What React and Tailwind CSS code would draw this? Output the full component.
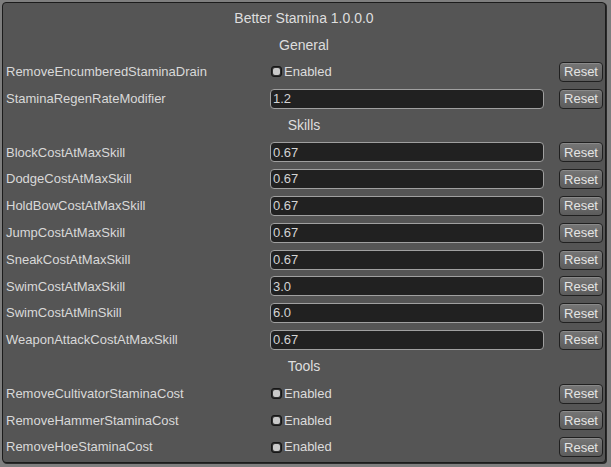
import React from 'react';

const sections = [
  {
    title: 'General',
    rows: [
      { name: 'RemoveEncumberedStaminaDrain', toggle: true },
      { name: 'StaminaRegenRateModifier', value: '1.2' },
    ],
  },
  {
    title: 'Skills',
    rows: [
      { name: 'BlockCostAtMaxSkill', value: '0.67' },
      { name: 'DodgeCostAtMaxSkill', value: '0.67' },
      { name: 'HoldBowCostAtMaxSkill', value: '0.67' },
      { name: 'JumpCostAtMaxSkill', value: '0.67' },
      { name: 'SneakCostAtMaxSkill', value: '0.67' },
      { name: 'SwimCostAtMaxSkill', value: '3.0' },
      { name: 'SwimCostAtMinSkill', value: '6.0' },
      { name: 'WeaponAttackCostAtMaxSkill', value: '0.67' },
    ],
  },
  {
    title: 'Tools',
    rows: [
      { name: 'RemoveCultivatorStaminaCost', toggle: true },
      { name: 'RemoveHammerStaminaCost', toggle: true },
      { name: 'RemoveHoeStaminaCost', toggle: true },
    ],
  },
];

function Toggle() {
  return (
    <div className="flex items-center pl-[1px]">
      <span className="flex items-center justify-center w-[11px] h-[11px] rounded-[3px] bg-[#303030] border border-[#161616]">
        <span className="w-[7px] h-[7px] rounded-[2px] bg-[#c9c9c9]" />
      </span>
      <span className="ml-[2px] text-[13px] text-[#dcdcdc]">Enabled</span>
    </div>
  );
}

function Row({ row }) {
  return (
    <div className="grid grid-cols-[264px_274px_1fr] items-center h-[26.8px] pl-[3px] pr-[2px]">
      <span className="text-[13px] text-[#d9d9d9]">{row.name}</span>
      {row.toggle ? (
        <Toggle />
      ) : (
        <div className="h-[20px] rounded-[4px] bg-[#212121] border border-[#a0a0a0] flex items-center pl-[2px] text-[13px] text-[#d4d4d4]">
          {row.value}
        </div>
      )}
      <div className="flex justify-end">
        <button className="w-[44px] h-[20px] rounded-[4px] border border-[#202020] bg-gradient-to-b from-[#767676] to-[#5c5c5c] text-[13px] leading-none text-[#e4e4e4] shadow-[inset_0_1px_0_#8a8a8a]">
          Reset
        </button>
      </div>
    </div>
  );
}

export default function App() {
  return (
    <div
      className="w-[611px] h-[467px] bg-[#7e7e7e] pt-[2px] pl-[2px] pr-[5px] pb-[4px]"
      style={{ fontFamily: '"Liberation Sans", Arial, sans-serif' }}
    >
      <div className="h-full rounded-[4px] border border-[#1b1b1b] bg-[#555555] pt-[2px] shadow-[1px_1px_0_#2a2a2a]">
        <div className="h-[26.8px] flex items-center justify-center text-[14px] text-[#dedede]">
          Better Stamina 1.0.0.0
        </div>
        {sections.map((s) => (
          <div key={s.title}>
            <div className="h-[26.8px] flex items-center justify-center text-[14px] text-[#dedede]">
              {s.title}
            </div>
            {s.rows.map((r) => (
              <Row key={r.name} row={r} />
            ))}
          </div>
        ))}
      </div>
    </div>
  );
}
